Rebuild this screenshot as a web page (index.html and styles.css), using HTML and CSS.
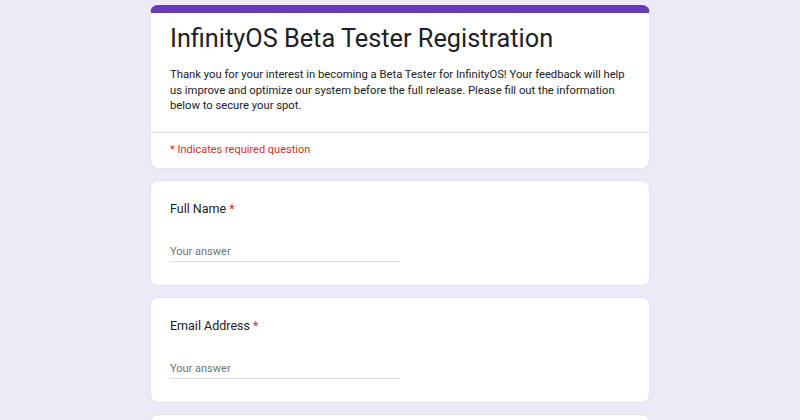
FILE: index.html
```html
<!DOCTYPE html>
<html lang="en">
<head>
<meta charset="utf-8">
<title>InfinityOS Beta Tester Registration</title>
<link rel="stylesheet" href="styles.css">
</head>
<body>
<main class="form">
  <section class="card header-card">
    <div class="header-body">
      <h1 class="title">InfinityOS Beta Tester Registration</h1>
      <p class="desc">Thank you for your interest in becoming a Beta Tester for InfinityOS! Your feedback will help us improve and optimize our system before the full release. Please fill out the information below to secure your spot.</p>
    </div>
    <div class="required-note">* Indicates required question</div>
  </section>
  <section class="card question">
    <div class="q-label">Full Name <span class="star">*</span></div>
    <div class="answer">Your answer</div>
  </section>
  <section class="card question">
    <div class="q-label">Email Address <span class="star">*</span></div>
    <div class="answer">Your answer</div>
  </section>
  <section class="card question"></section>
</main>
</body>
</html>
```

FILE: styles.css
```css
html, body {
  margin: 0;
  padding: 0;
}
body {
  background: #ede9f7;
  font-family: Roboto, "Liberation Sans", sans-serif;
  color: #202124;
  height: 420px;
  overflow: hidden;
}
.form {
  width: 500px;
  margin: 0 auto;
  padding-top: 5px;
  display: flex;
  flex-direction: column;
  gap: 11px;
}
.card {
  background: #fff;
  border: 1px solid #e3e1ea;
  border-radius: 8px;
  box-sizing: border-box;
}
.header-card {
  border-top: 8px solid #673ab7;
}
.header-body {
  padding: 10px 19px 18px;
  border-bottom: 1px solid #dadce0;
}
.title {
  margin: 0;
  font-size: 25.3px;
  font-weight: 400;
  line-height: 32px;
  color: #202124;
}
.desc {
  margin: 12px 0 0;
  font-size: 11.25px;
  line-height: 15.5px;
  color: #202124;
}
.required-note {
  padding: 10px 19px 11px;
  font-size: 11px;
  line-height: 14px;
  color: #d93025;
}
.question {
  height: 106px;
  flex-shrink: 0;
  padding: 19px 19px 0;
}
.q-label {
  font-size: 12.5px;
  line-height: 18px;
  color: #202124;
}
.star {
  color: #d93025;
}
.answer {
  margin-top: 27px;
  width: 230px;
  font-size: 11px;
  line-height: 14px;
  padding-bottom: 2px;
  color: #70757a;
  border-bottom: 1px solid #dadce0;
}
```
